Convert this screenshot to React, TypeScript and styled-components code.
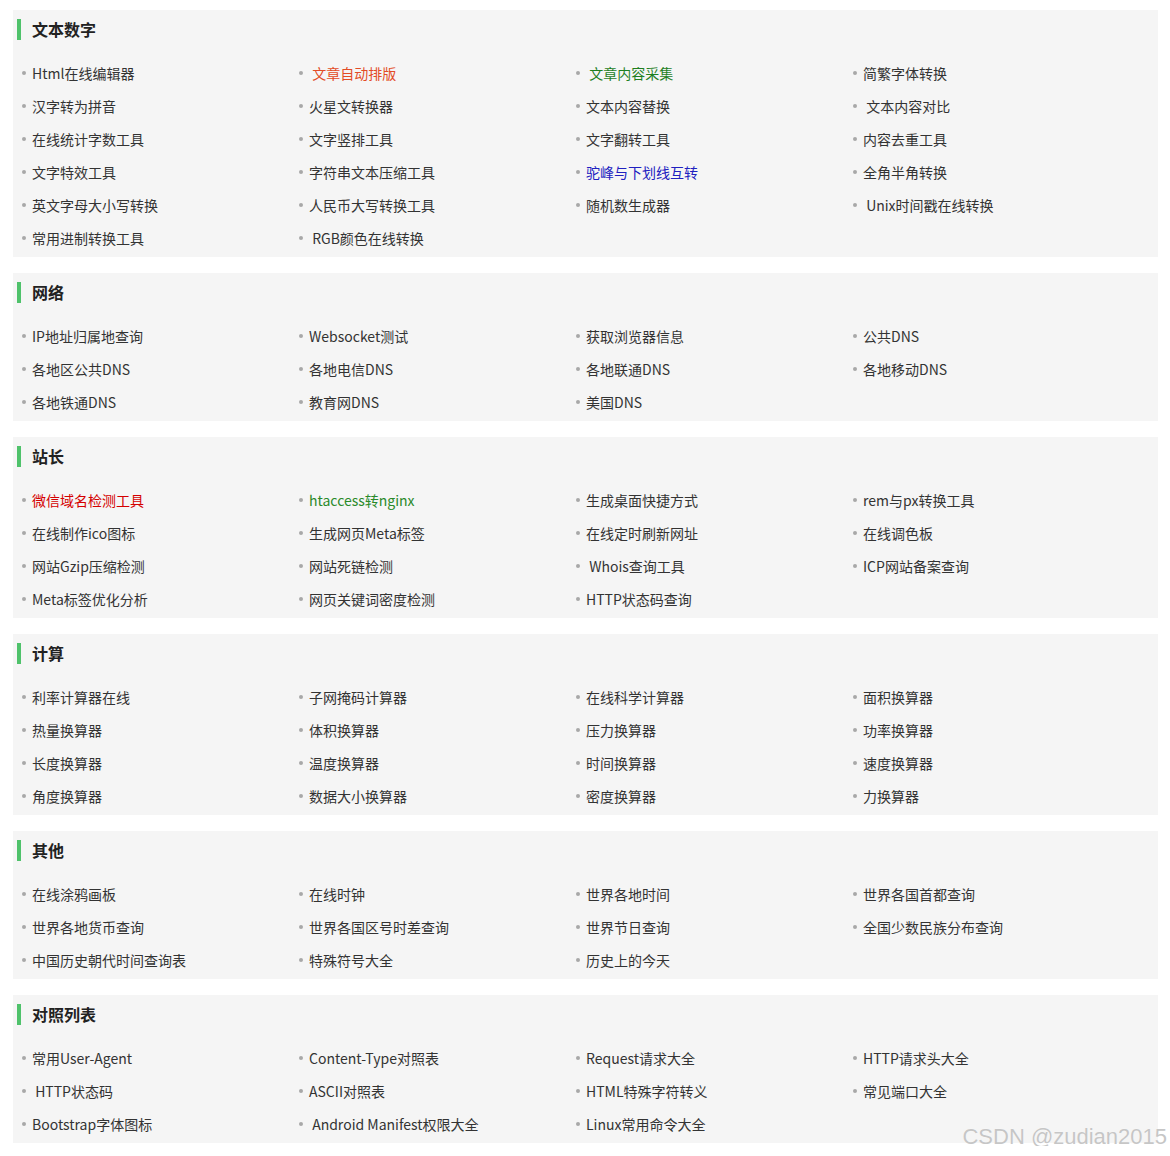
import React from "react";
import styled, { createGlobalStyle } from "styled-components";

const Global = createGlobalStyle`
  html, body { margin: 0; padding: 0; background: #ffffff; }
  body { font-family: "Noto Sans CJK SC", "Noto Sans", sans-serif; }
`;

const Page = styled.div`
  padding: 10px 12px 0 13px;
  display: flex;
  flex-direction: column;
  gap: 16px;
  position: relative;
  height: 1146px;
  box-sizing: border-box;
`;

const Section = styled.section`
  background: #f5f5f5;
  padding: 9px 0 3px 0;
`;

const Header = styled.h2`
  margin: 0 0 16px 4px;
  height: 21px;
  display: flex;
  align-items: center;
  border-left: 4px solid #4fc26b;
  padding-left: 11px;
  font-size: 16px;
  font-weight: 700;
  color: #222;
  line-height: 21px;
`;

const List = styled.ul`
  list-style: none;
  margin: 0;
  padding: 0 0 0 8px;
  display: grid;
  grid-template-columns: repeat(4, 277px);
`;

const Item = styled.li<{ $color?: string }>`
  height: 33px;
  display: flex;
  align-items: center;
  font-size: 14px;
  color: ${(p) => p.$color || "#333"};
  white-space: pre;
  &::before {
    content: "";
    width: 4px;
    height: 4px;
    border-radius: 50%;
    background: #a8a8a8;
    margin: 0 6px 0 1px;
    flex: none;
  }
`;

const Watermark = styled.div`
  position: absolute;
  right: 3px;
  bottom: -2px;
  font-family: "Liberation Sans", Arial, sans-serif;
  font-size: 22px;
  line-height: 22px;
  color: #c6c6c6;
  text-shadow: 0 0 1px #ffffff;
  pointer-events: none;
`;

type Tool = { t: string; c?: string };

const RED_ORANGE = "#e34c26";
const GREEN = "#1f7f1f";
const BLUE = "#2020c0";
const RED = "#d40000";
const GREEN2 = "#2a8a2a";

const sections: { title: string; items: Tool[] }[] = [
  {
    title: "文本数字",
    items: [
      { t: "Html在线编辑器" },
      { t: " 文章自动排版", c: RED_ORANGE },
      { t: " 文章内容采集", c: GREEN },
      { t: "简繁字体转换" },
      { t: "汉字转为拼音" },
      { t: "火星文转换器" },
      { t: "文本内容替换" },
      { t: " 文本内容对比" },
      { t: "在线统计字数工具" },
      { t: "文字竖排工具" },
      { t: "文字翻转工具" },
      { t: "内容去重工具" },
      { t: "文字特效工具" },
      { t: "字符串文本压缩工具" },
      { t: "驼峰与下划线互转", c: BLUE },
      { t: "全角半角转换" },
      { t: "英文字母大小写转换" },
      { t: "人民币大写转换工具" },
      { t: "随机数生成器" },
      { t: " Unix时间戳在线转换" },
      { t: "常用进制转换工具" },
      { t: " RGB颜色在线转换" },
    ],
  },
  {
    title: "网络",
    items: [
      { t: "IP地址归属地查询" },
      { t: "Websocket测试" },
      { t: "获取浏览器信息" },
      { t: "公共DNS" },
      { t: "各地区公共DNS" },
      { t: "各地电信DNS" },
      { t: "各地联通DNS" },
      { t: "各地移动DNS" },
      { t: "各地铁通DNS" },
      { t: "教育网DNS" },
      { t: "美国DNS" },
    ],
  },
  {
    title: "站长",
    items: [
      { t: "微信域名检测工具", c: RED },
      { t: "htaccess转nginx", c: GREEN2 },
      { t: "生成桌面快捷方式" },
      { t: "rem与px转换工具" },
      { t: "在线制作ico图标" },
      { t: "生成网页Meta标签" },
      { t: "在线定时刷新网址" },
      { t: "在线调色板" },
      { t: "网站Gzip压缩检测" },
      { t: "网站死链检测" },
      { t: " Whois查询工具" },
      { t: "ICP网站备案查询" },
      { t: "Meta标签优化分析" },
      { t: "网页关键词密度检测" },
      { t: "HTTP状态码查询" },
    ],
  },
  {
    title: "计算",
    items: [
      { t: "利率计算器在线" },
      { t: "子网掩码计算器" },
      { t: "在线科学计算器" },
      { t: "面积换算器" },
      { t: "热量换算器" },
      { t: "体积换算器" },
      { t: "压力换算器" },
      { t: "功率换算器" },
      { t: "长度换算器" },
      { t: "温度换算器" },
      { t: "时间换算器" },
      { t: "速度换算器" },
      { t: "角度换算器" },
      { t: "数据大小换算器" },
      { t: "密度换算器" },
      { t: "力换算器" },
    ],
  },
  {
    title: "其他",
    items: [
      { t: "在线涂鸦画板" },
      { t: "在线时钟" },
      { t: "世界各地时间" },
      { t: "世界各国首都查询" },
      { t: "世界各地货币查询" },
      { t: "世界各国区号时差查询" },
      { t: "世界节日查询" },
      { t: "全国少数民族分布查询" },
      { t: "中国历史朝代时间查询表" },
      { t: "特殊符号大全" },
      { t: "历史上的今天" },
    ],
  },
  {
    title: "对照列表",
    items: [
      { t: "常用User-Agent" },
      { t: "Content-Type对照表" },
      { t: "Request请求大全" },
      { t: "HTTP请求头大全" },
      { t: " HTTP状态码" },
      { t: "ASCII对照表" },
      { t: "HTML特殊字符转义" },
      { t: "常见端口大全" },
      { t: "Bootstrap字体图标" },
      { t: " Android Manifest权限大全" },
      { t: "Linux常用命令大全" },
    ],
  },
];

export default function App() {
  return (
    <>
      <Global />
      <Page>
        {sections.map((s) => (
          <Section key={s.title}>
            <Header>{s.title}</Header>
            <List>
              {s.items.map((it) => (
                <Item key={it.t} $color={it.c}>
                  {it.t}
                </Item>
              ))}
            </List>
          </Section>
        ))}
        <Watermark>CSDN @zudian2015</Watermark>
      </Page>
    </>
  );
}
